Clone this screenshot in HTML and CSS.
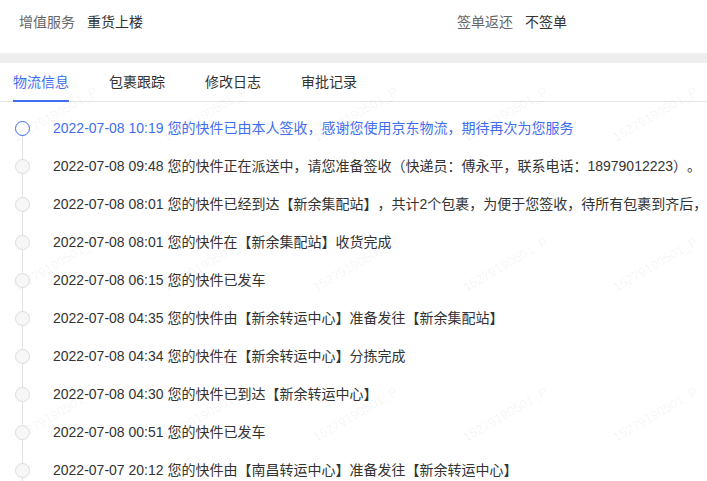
FILE: index.html
```html
<!DOCTYPE html>
<html lang="zh-CN">
  <head>
    <meta charset="UTF-8" />
    <meta name="viewport" content="width=device-width, initial-scale=1.0" />
    <title>物流信息</title>
    <link rel="stylesheet" href="styles.css">
  </head>
  <body>
    <div class="info-row">
      <div class="info-item">
        <span class="label">增值服务</span>
        <span class="value">重货上楼</span>
      </div>
      <div class="info-item">
        <span class="label">签单返还</span>
        <span class="value">不签单</span>
      </div>
    </div>
    <div class="divider"></div>

    <div class="tabs">
      <div class="tab active">物流信息</div>
      <div class="tab">包裹跟踪</div>
      <div class="tab">修改日志</div>
      <div class="tab">审批记录</div>
    </div>

    <ul class="timeline">
      <li class="node current"><span class="axis"><i class="dot"></i></span><span class="text">2022-07-08 10:19 您的快件已由本人签收，感谢您使用京东物流，期待再次为您服务</span></li>
      <li class="node"><span class="axis"><i class="dot"></i></span><span class="text">2022-07-08 09:48 您的快件正在派送中，请您准备签收（快递员：傅永平，联系电话：18979012223）。</span></li>
      <li class="node"><span class="axis"><i class="dot"></i></span><span class="text">2022-07-08 08:01 您的快件已经到达【新余集配站】，共计2个包裹，为便于您签收，待所有包裹到齐后，</span></li>
      <li class="node"><span class="axis"><i class="dot"></i></span><span class="text">2022-07-08 08:01 您的快件在【新余集配站】收货完成</span></li>
      <li class="node"><span class="axis"><i class="dot"></i></span><span class="text">2022-07-08 06:15 您的快件已发车</span></li>
      <li class="node"><span class="axis"><i class="dot"></i></span><span class="text">2022-07-08 04:35 您的快件由【新余转运中心】准备发往【新余集配站】</span></li>
      <li class="node"><span class="axis"><i class="dot"></i></span><span class="text">2022-07-08 04:34 您的快件在【新余转运中心】分拣完成</span></li>
      <li class="node"><span class="axis"><i class="dot"></i></span><span class="text">2022-07-08 04:30 您的快件已到达【新余转运中心】</span></li>
      <li class="node"><span class="axis"><i class="dot"></i></span><span class="text">2022-07-08 00:51 您的快件已发车</span></li>
      <li class="node"><span class="axis"><i class="dot"></i></span><span class="text">2022-07-07 20:12 您的快件由【南昌转运中心】准备发往【新余转运中心】</span></li>
    </ul>

    <!-- 水印 -->
    <div class="watermark">
      <span>15279190501_P</span><span>15279190501_P</span><span>15279190501_P</span><span>15279190501_P</span><span>15279190501_P</span>
      <span>15279190501_P</span><span>15279190501_P</span><span>15279190501_P</span><span>15279190501_P</span><span>15279190501_P</span>
      <span>15279190501_P</span><span>15279190501_P</span><span>15279190501_P</span><span>15279190501_P</span><span>15279190501_P</span>
    </div>
  </body>
</html>
```

FILE: styles.css
```css
html,
body {
  height: 100%;
  overflow: hidden;
}
body {
  margin: 0;
  font-family: "Liberation Sans", "Noto Sans CJK SC", sans-serif;
  font-size: 14px;
  color: #333;
  background: #fff;
  position: relative;
  text-spacing-trim: space-all;
}
.info-row {
  display: grid;
  grid-template-columns: 438px 1fr;
  height: 53px;
  padding: 12px 0 0 19px;
  box-sizing: border-box;
  line-height: 20px;
}
.info-item .label {
  color: #666;
  margin-right: 8px;
}
.info-item .value {
  color: #333;
}
.divider {
  height: 10px;
  background: #eeeeee;
}
.tabs {
  display: flex;
  gap: 40px;
  padding-left: 13px;
  border-bottom: 1px solid #e4e4e4;
}
.tab {
  line-height: 20px;
  padding: 9px 0 8px;
  border-bottom: 2px solid transparent;
  margin-bottom: -1px;
  color: #333;
  cursor: pointer;
}
.tab.active {
  color: #3f6ef3;
  border-bottom-color: #3f6ef3;
}
.timeline {
  list-style: none;
  margin: 0;
  padding: 7px 0 0 15px;
}
.node {
  display: flex;
  align-items: center;
  height: 38px;
  white-space: nowrap;
}
.axis {
  position: relative;
  width: 15px;
  align-self: stretch;
  display: flex;
  align-items: center;
  margin-right: 23px;
  flex-shrink: 0;
}
/* 连接线 */
.axis::after {
  content: "";
  position: absolute;
  left: 7px;
  top: 50%;
  height: 100%;
  width: 1px;
  background: #e2e2e2;
}
.dot {
  position: relative;
  z-index: 1;
  width: 15px;
  height: 15px;
  box-sizing: border-box;
  border-radius: 50%;
  border: 1px solid #dcdcdc;
  background: #f7f7f7;
}
.node.current .dot {
  border: 1.5px solid #3f6ef3;
  background: #fff;
}
.node.current .text {
  color: #3f6ef3;
}
.text {
  line-height: 20px;
}
.watermark {
  position: absolute;
  left: -20px;
  top: 39px;
  display: grid;
  grid-template-columns: repeat(5, 150px);
  grid-auto-rows: 150px;
  pointer-events: none;
}
.watermark span {
  display: flex;
  align-items: center;
  justify-content: center;
  font-size: 13px;
  color: rgba(0, 0, 0, 0.06);
  transform: rotate(-30deg);
}
```
